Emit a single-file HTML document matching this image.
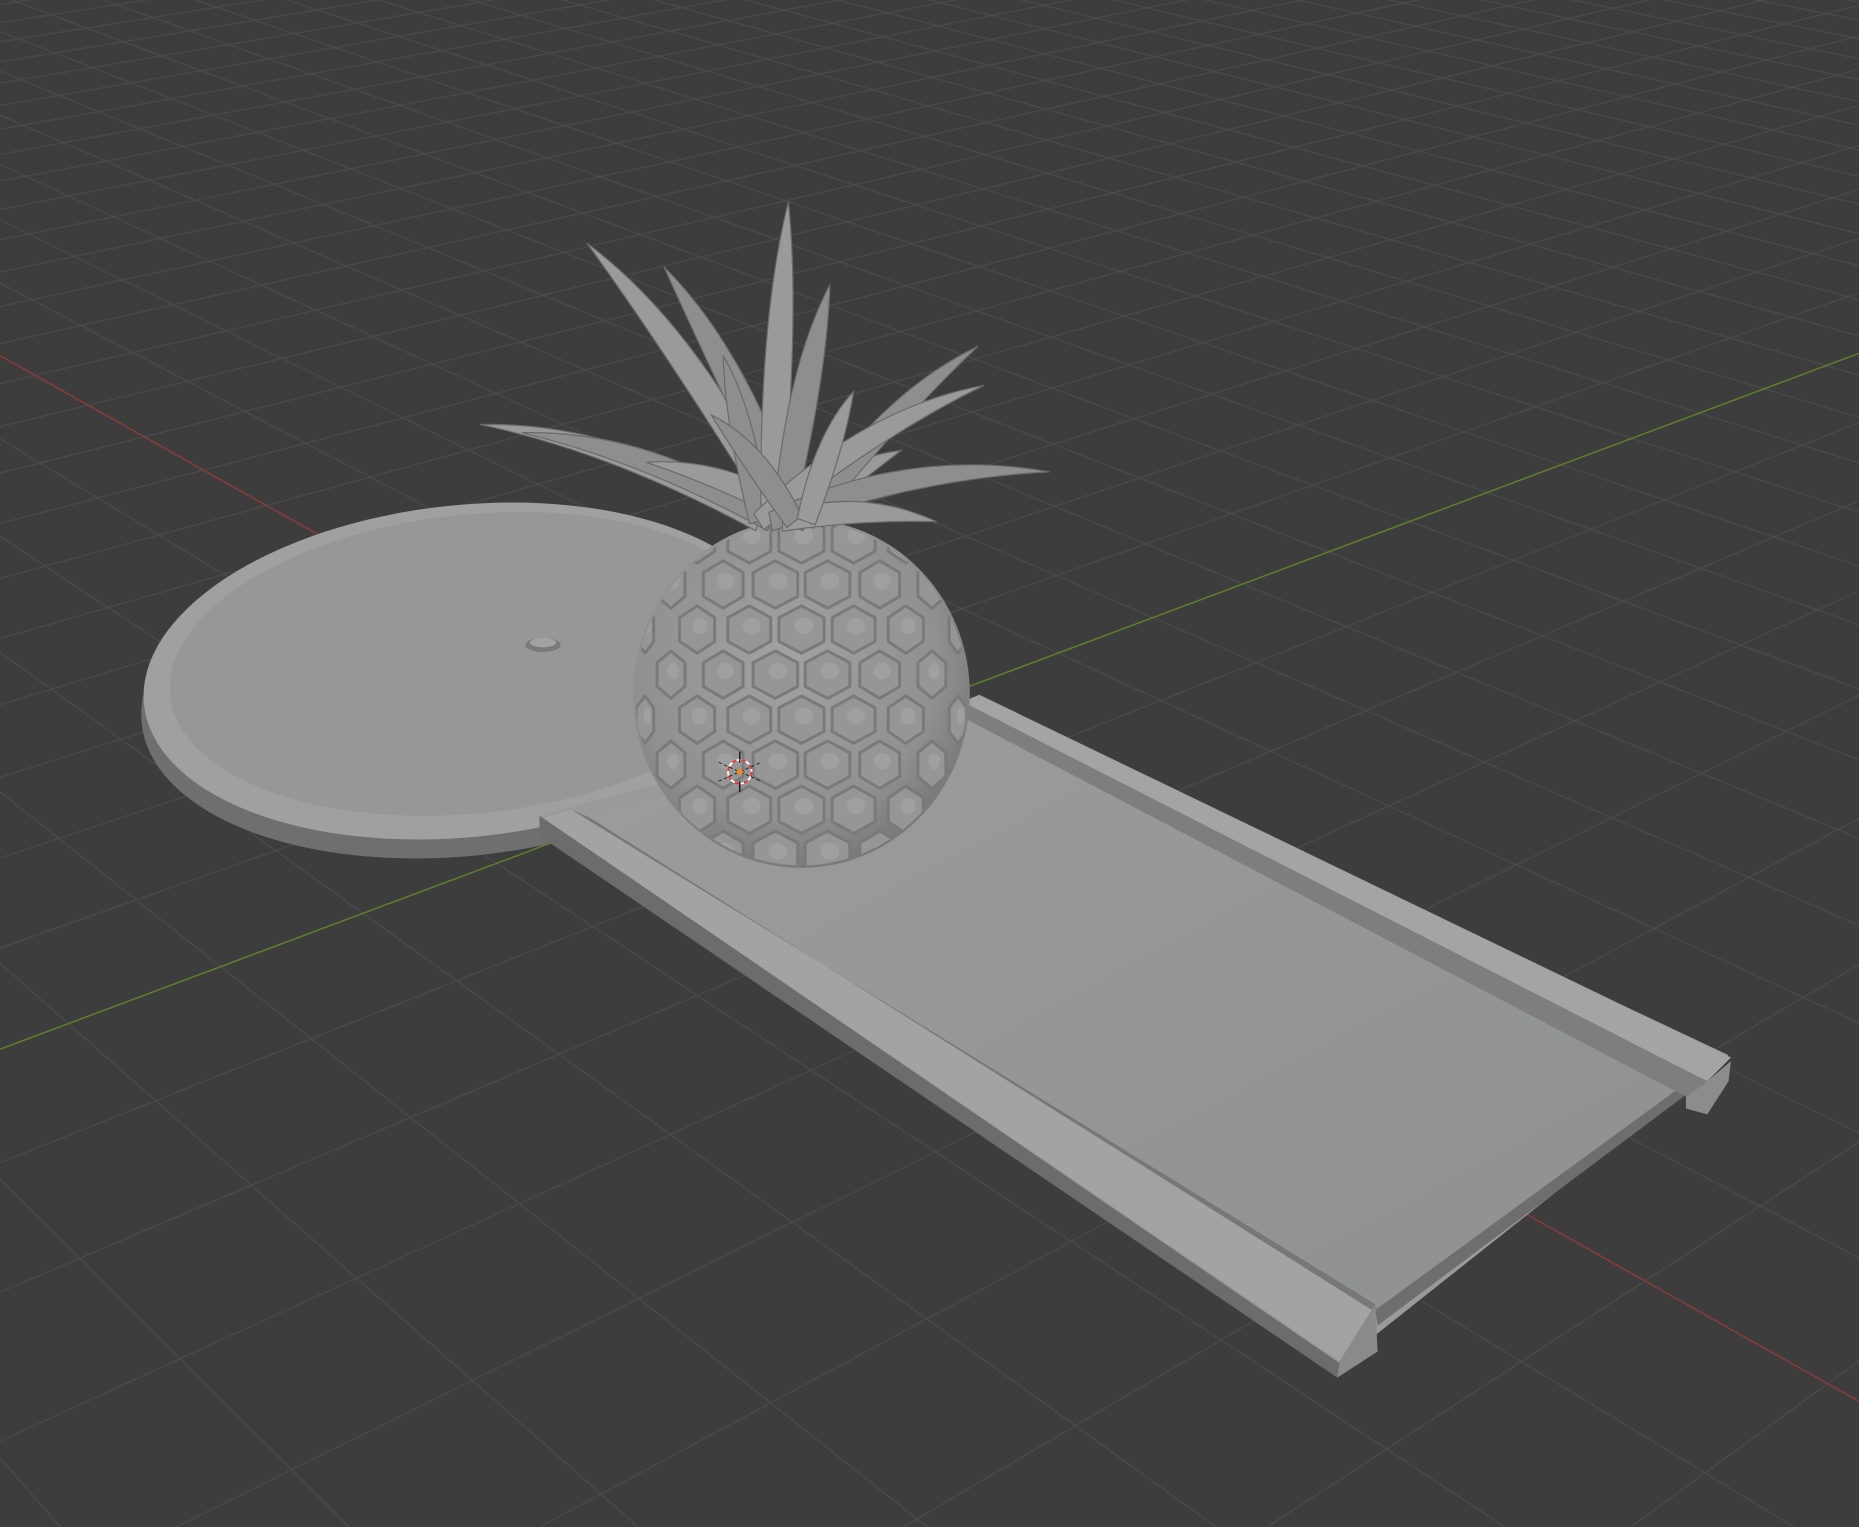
<!DOCTYPE html>
<html><head><meta charset="utf-8"><style>
html,body{margin:0;padding:0;background:#3d3d3d;overflow:hidden;width:1859px;height:1527px}
svg{display:block;position:absolute;left:0;top:0}
</style></head><body>
<svg id="s" width="1859" height="1527" viewBox="0 0 1568 1288" preserveAspectRatio="none" xmlns="http://www.w3.org/2000/svg">
<defs>
<radialGradient id="pg" cx="0.45" cy="0.4" r="0.65">
<stop offset="0" stop-color="#a2a2a2"/><stop offset="0.7" stop-color="#909090"/><stop offset="1" stop-color="#737373"/>
</radialGradient>
<linearGradient id="fl" x1="0" y1="0" x2="1" y2="1">
<stop offset="0" stop-color="#9c9c9c"/><stop offset="1" stop-color="#8f9090"/>
</linearGradient>
<clipPath id="pc"><ellipse cx="676" cy="585" rx="140" ry="145"/></clipPath>
</defs>
<rect width="1568" height="1288" fill="#3d3d3d"/>
<g id="grid" stroke="#4b4b4b" stroke-width="1"></g>
<line x1="0" y1="300" x2="1568" y2="1182" stroke="#8a3a3a" stroke-width="1.3"/>
<line x1="0" y1="885" x2="1568" y2="298" stroke="#5d7d2c" stroke-width="1.3"/>

<ellipse cx="390" cy="582" rx="272" ry="140" fill="#6f6f6f" transform="rotate(-6 390 582)"/>
<ellipse cx="392" cy="566" rx="272" ry="140" fill="#a0a0a0" transform="rotate(-6 392 566)"/>
<ellipse cx="398" cy="560" rx="256" ry="126" fill="#979797" transform="rotate(-6 398 560)"/>
<ellipse cx="458" cy="544" rx="15" ry="6" fill="#7a7a7a"/>
<ellipse cx="458" cy="542" rx="11" ry="4" fill="#a2a2a2"/>

<polygon points="455,688 1130,1150 1128,1162 455,705" fill="#6c6c6c"/>
<polygon points="455,688 820,590 1458,890 1130,1150" fill="#9a9a9a"/>
<polygon points="490,690 815,608 1420,915 1160,1105" fill="url(#fl)"/>
<polygon points="1160,1105 1420,915 1420,925 1162,1118" fill="#6e6e6e"/>
<polygon points="458,690 482,683 1160,1100 1130,1148" fill="#a3a3a3"/>
<polygon points="482,683 498,690 1162,1108 1160,1100" fill="#777"/>
<polygon points="1130,1148 1160,1100 1162,1140 1128,1162" fill="#8a8a8a"/>
<polygon points="812,592 826,586 1460,892 1440,912" fill="#a4a4a4"/>
<polygon points="812,592 1440,912 1422,925 812,605" fill="#7e7e7e"/>
<polygon points="1422,925 1440,912 1460,895 1458,912 1440,940 1422,935" fill="#8c8c8c"/>

<ellipse cx="676" cy="585" rx="142" ry="147" fill="url(#pg)"/>
<g id="scales" clip-path="url(#pc)"></g>
<g id="leaves"></g>

<g transform="translate(624,651)">
<circle r="10" fill="none" stroke="#fff" stroke-width="1.5"/>
<circle r="10" fill="none" stroke="#e33" stroke-width="1.5" stroke-dasharray="4 4"/>
<line x1="0" y1="-17" x2="0" y2="-8" stroke="#000" stroke-width="1"/>
<line x1="0" y1="8" x2="0" y2="17" stroke="#000" stroke-width="1"/>
<line x1="-18" y1="-8" x2="18" y2="8" stroke="#222" stroke-width="0.8" stroke-dasharray="3 2"/>
<line x1="-18" y1="8" x2="18" y2="-8" stroke="#222" stroke-width="0.8" stroke-dasharray="3 2"/>
<circle r="2.5" fill="#f08a1c"/>
</g>
</svg>
<script>
(function(){
var NS="http://www.w3.org/2000/svg";
function el(t,a,p){var e=document.createElementNS(NS,t);for(var k in a)e.setAttribute(k,a[k]);p.appendChild(e);return e;}
var O=[624.7,651],VR=[-1599,-600],VG=[3970,-600],k1=0.0365,k2=0.029;
function P(u,v){var d=1+u*k1+v*k2;return [(O[0]+u*k1*VR[0]+v*k2*VG[0])/d,(O[1]+u*k1*VR[1]+v*k2*VG[1])/d];}
var g=document.getElementById("grid");
for(var u=-40;u<=80;u++){if(u==0)continue;var vmin=Math.max(-60,(0.03-1-u*k1)/k2);var a=P(u,vmin),b=P(u,400);
el("line",{x1:a[0],y1:a[1],x2:b[0],y2:b[1]},g);}
for(var v=-60;v<=120;v++){if(v==0)continue;var umin=Math.max(-60,(0.03-1-v*k2)/k1);var a=P(umin,v),b=P(300,v);
el("line",{x1:a[0],y1:a[1],x2:b[0],y2:b[1]},g);}
var sc=document.getElementById("scales");
for(var r=0;r<8;r++){for(var c=-5;c<=5;c++){
var cy=455+r*38,cx=676+c*44+(r%2?22:0);
var dx=(cx-676)/140;var w=40*Math.sqrt(Math.max(0.15,1-dx*dx));
var pts=[];for(var i=0;i<6;i++){var an=Math.PI/3*i+Math.PI/6;pts.push((cx+Math.cos(an)*w*0.55)+","+(cy+Math.sin(an)*20));}
el("polygon",{points:pts.join(" "),fill:"#969696",stroke:"#7a7a7a","stroke-width":2.5,"stroke-linejoin":"round"},sc);
el("ellipse",{cx:cx+2,cy:cy-3,rx:w*0.2,ry:7,fill:"#a0a0a0"},sc);
}}
var lv=document.getElementById("leaves");
var tips=[[405,358,0],[440,365,0],[495,205,1],[560,225,1],[545,390,0],[610,300,0],[665,170,1],[700,240,1],[760,380,0],[825,292,0],[830,325,0],[885,398,0],[790,440,0],[600,350,0],[720,330,0]];
tips.forEach(function(t,i){
var bx=640+(i%5)*10,by=440;var tx=t[0],ty=t[1];
var dx=tx-bx,dy=ty-by,L=Math.sqrt(dx*dx+dy*dy);var nx=-dy/L,ny=dx/L;var w=t[2]?18:14;
var mx=bx+dx*0.5,my=by+dy*0.5-L*0.12;
var d="M"+(bx-nx*8)+","+(by-ny*8)+" Q"+(mx-nx*w)+","+(my-ny*w)+" "+tx+","+ty+" Q"+(mx+nx*w)+","+(my+ny*w)+" "+(bx+nx*8)+","+(by+ny*8)+"Z";
el("path",{d:d,fill:i%2?"#8e8e8e":"#9a9a9a",stroke:"#6a6a6a","stroke-width":1},lv);
});
})();
</script>
</body></html>
